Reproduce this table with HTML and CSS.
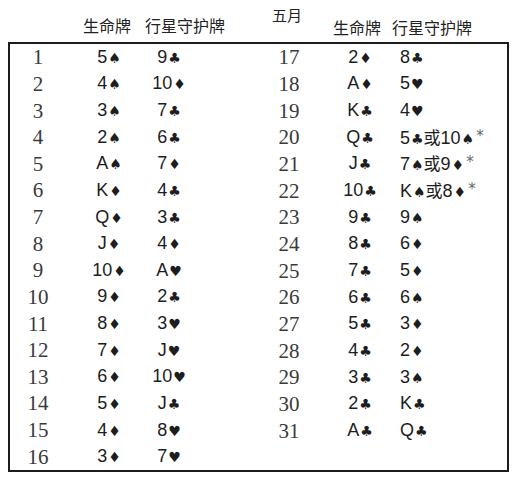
FILE: index.html
```html
<!DOCTYPE html>
<html lang="zh">
<head>
<meta charset="utf-8">
<link rel="stylesheet" href="styles.css">
</head>
<body>
<div class="head">
  <span class="h-life-l">生命牌</span>
  <span class="h-guard-l">行星守护牌</span>
  <span class="h-month">五月</span>
  <span class="h-life-r">生命牌</span>
  <span class="h-guard-r">行星守护牌</span>
</div>
<div class="table">
  <div class="half left">
    <div class="row"><span class="num">1</span><span class="card">5<span class="s">♠</span></span><span class="card g">9<span class="s">♣</span></span></div>
    <div class="row"><span class="num">2</span><span class="card">4<span class="s">♠</span></span><span class="card g">10<span class="s">♦</span></span></div>
    <div class="row"><span class="num">3</span><span class="card">3<span class="s">♠</span></span><span class="card g">7<span class="s">♣</span></span></div>
    <div class="row"><span class="num">4</span><span class="card">2<span class="s">♠</span></span><span class="card g">6<span class="s">♣</span></span></div>
    <div class="row"><span class="num">5</span><span class="card">A<span class="s">♠</span></span><span class="card g">7<span class="s">♦</span></span></div>
    <div class="row"><span class="num">6</span><span class="card">K<span class="s">♦</span></span><span class="card g">4<span class="s">♣</span></span></div>
    <div class="row"><span class="num">7</span><span class="card">Q<span class="s">♦</span></span><span class="card g">3<span class="s">♣</span></span></div>
    <div class="row"><span class="num">8</span><span class="card">J<span class="s">♦</span></span><span class="card g">4<span class="s">♦</span></span></div>
    <div class="row"><span class="num">9</span><span class="card">10<span class="s">♦</span></span><span class="card g">A<span class="s">♥</span></span></div>
    <div class="row"><span class="num">10</span><span class="card">9<span class="s">♦</span></span><span class="card g">2<span class="s">♣</span></span></div>
    <div class="row"><span class="num">11</span><span class="card">8<span class="s">♦</span></span><span class="card g">3<span class="s">♥</span></span></div>
    <div class="row"><span class="num">12</span><span class="card">7<span class="s">♦</span></span><span class="card g">J<span class="s">♥</span></span></div>
    <div class="row"><span class="num">13</span><span class="card">6<span class="s">♦</span></span><span class="card g">10<span class="s">♥</span></span></div>
    <div class="row"><span class="num">14</span><span class="card">5<span class="s">♦</span></span><span class="card g">J<span class="s">♣</span></span></div>
    <div class="row"><span class="num">15</span><span class="card">4<span class="s">♦</span></span><span class="card g">8<span class="s">♥</span></span></div>
    <div class="row"><span class="num">16</span><span class="card">3<span class="s">♦</span></span><span class="card g">7<span class="s">♥</span></span></div>
  </div>
  <div class="half right">
    <div class="row"><span class="num">17</span><span class="card">2<span class="s">♦</span></span><span class="card g">8<span class="s">♣</span></span></div>
    <div class="row"><span class="num">18</span><span class="card">A<span class="s">♦</span></span><span class="card g">5<span class="s">♥</span></span></div>
    <div class="row"><span class="num">19</span><span class="card">K<span class="s">♣</span></span><span class="card g">4<span class="s">♥</span></span></div>
    <div class="row"><span class="num">20</span><span class="card">Q<span class="s">♣</span></span><span class="card g">5<span class="s">♣</span><span class="or">或</span>10<span class="s">♠</span><span class="star">*</span></span></div>
    <div class="row"><span class="num">21</span><span class="card">J<span class="s">♣</span></span><span class="card g">7<span class="s">♠</span><span class="or">或</span>9<span class="s">♦</span><span class="star">*</span></span></div>
    <div class="row"><span class="num">22</span><span class="card">10<span class="s">♣</span></span><span class="card g">K<span class="s">♠</span><span class="or">或</span>8<span class="s">♦</span><span class="star">*</span></span></div>
    <div class="row"><span class="num">23</span><span class="card">9<span class="s">♣</span></span><span class="card g">9<span class="s">♠</span></span></div>
    <div class="row"><span class="num">24</span><span class="card">8<span class="s">♣</span></span><span class="card g">6<span class="s">♦</span></span></div>
    <div class="row"><span class="num">25</span><span class="card">7<span class="s">♣</span></span><span class="card g">5<span class="s">♦</span></span></div>
    <div class="row"><span class="num">26</span><span class="card">6<span class="s">♣</span></span><span class="card g">6<span class="s">♠</span></span></div>
    <div class="row"><span class="num">27</span><span class="card">5<span class="s">♣</span></span><span class="card g">3<span class="s">♦</span></span></div>
    <div class="row"><span class="num">28</span><span class="card">4<span class="s">♣</span></span><span class="card g">2<span class="s">♦</span></span></div>
    <div class="row"><span class="num">29</span><span class="card">3<span class="s">♣</span></span><span class="card g">3<span class="s">♠</span></span></div>
    <div class="row"><span class="num">30</span><span class="card">2<span class="s">♣</span></span><span class="card g">K<span class="s">♣</span></span></div>
    <div class="row"><span class="num">31</span><span class="card">A<span class="s">♣</span></span><span class="card g">Q<span class="s">♣</span></span></div>
  </div>
</div>
</body>
</html>
```

FILE: styles.css
```css
html, body {
  margin: 0;
  padding: 0;
  background: #ffffff;
}

body {
  width: 517px;
  color: #1d1d1d;
}

.head {
  display: flex;
  align-items: flex-start;
  height: 42px;
  font-family: "Noto Sans CJK SC", sans-serif;
  font-size: 16px;
  line-height: 16px;
  color: #222;
  white-space: nowrap;
}

.h-life-l { margin-left: 83px; margin-top: 17px; }
.h-guard-l { margin-left: 14px; margin-top: 17px; }
.h-month { margin-left: 47px; margin-top: 7px; font-size: 15px; line-height: 15px; }
.h-life-r { margin-left: 31px; margin-top: 19px; }
.h-guard-r { margin-left: 11px; margin-top: 19px; }

.table {
  margin-left: 8px;
  width: 501px;
  height: 430px;
  box-sizing: border-box;
  border: 2px solid #1c1c1c;
  display: flex;
}

.half {
  display: flex;
  flex-direction: column;
}

.left { width: 248px; }
.right { width: 249px; }

.row {
  display: grid;
  height: 26.67px;
  align-items: center;
  line-height: 20px;
}

.left .row { grid-template-columns: 56px 86px 34px; }
.right .row { grid-template-columns: 62px 80px 1fr; }

.num {
  font-family: "Liberation Serif", serif;
  font-size: 21px;
  color: #3a3a3a;
  text-align: center;
}

.card {
  font-family: "Liberation Sans", "Noto Sans CJK SC", sans-serif;
  font-size: 18px;
  text-align: center;
  white-space: nowrap;
  color: #1d1d1d;
}

.right .card.g { text-align: left; }

.s {
  font-family: "DejaVu Sans", sans-serif;
  font-size: 14px;
  margin-left: 1px;
}

.or {
  font-family: "Noto Sans CJK SC", sans-serif;
  font-size: 17px;
}

.star {
  font-family: "DejaVu Sans", sans-serif;
  font-size: 15px;
  vertical-align: 3px;
  color: #666;
  margin-left: 2px;
}
```
